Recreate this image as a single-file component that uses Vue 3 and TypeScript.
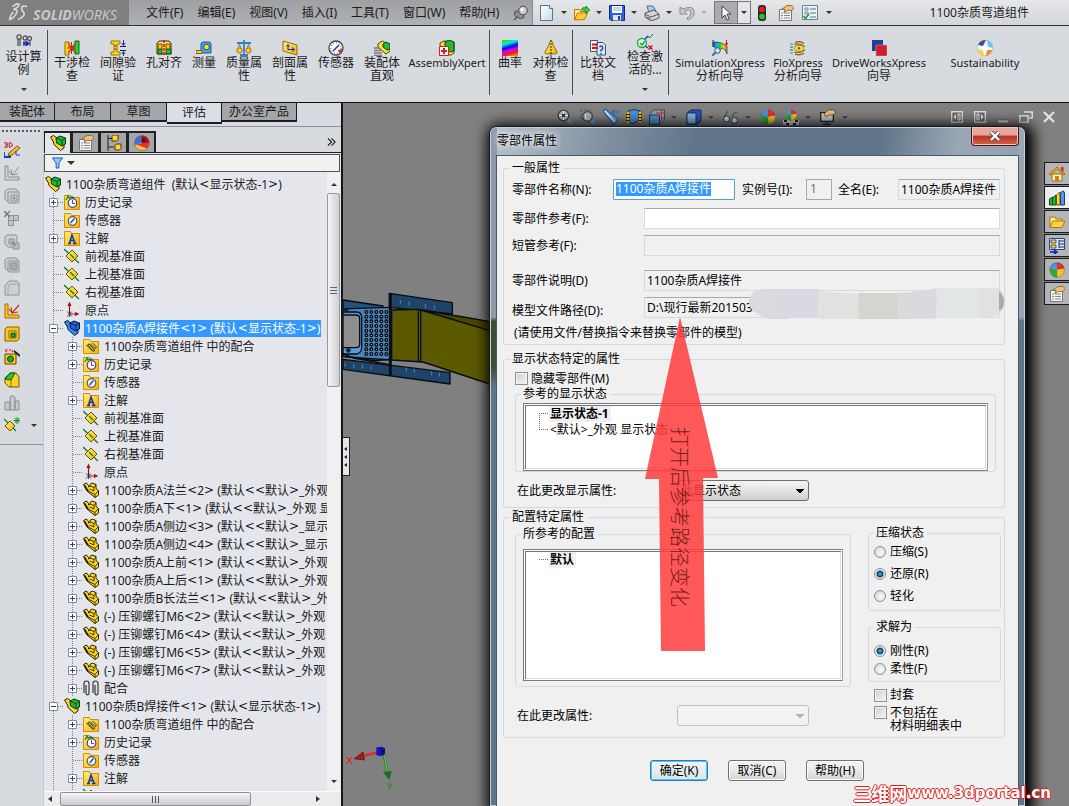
<script setup lang="ts">
import { ref } from 'vue'

interface Tool { icon: string; lines: string[]; w: number; tall?: boolean; caret?: boolean; sep?: boolean }
interface Node { d: number; icon: string; text: string; exp?: '+' | '-'; sel?: boolean }

const menus = ['文件(F)', '编辑(E)', '视图(V)', '插入(I)', '工具(T)', '窗口(W)', '帮助(H)']
const quick = ['new', 'open', 'save', 'print', 'undo']

const tools: Tool[] = [
  { icon: 'design', lines: ['设计算', '例'], w: 47, tall: true, caret: true, sep: true },
  { icon: 'interf', lines: ['干涉检', '查'], w: 46 },
  { icon: 'clear', lines: ['间隙验', '证'], w: 46 },
  { icon: 'hole', lines: ['孔对齐'], w: 46 },
  { icon: 'measure', lines: ['测量'], w: 34 },
  { icon: 'mass', lines: ['质量属', '性'], w: 46 },
  { icon: 'section', lines: ['剖面属', '性'], w: 46 },
  { icon: 'gauge', lines: ['传感器'], w: 46 },
  { icon: 'visual', lines: ['装配体', '直观'], w: 46 },
  { icon: 'axpert', lines: ['AssemblyXpert'], w: 84, sep: true },
  { icon: 'curv', lines: ['曲率'], w: 38 },
  { icon: 'symm', lines: ['对称检', '查'], w: 43, sep: true },
  { icon: 'compare', lines: ['比较文', '档'], w: 48 },
  { icon: 'active', lines: ['检查激', '活的...'], w: 46, tall: true, caret: true, sep: true },
  { icon: 'sim', lines: ['SimulationXpress', '分析向导'], w: 100 },
  { icon: 'flo', lines: ['FloXpress', '分析向导'], w: 56 },
  { icon: 'drive', lines: ['DriveWorksXpress', '向导'], w: 106 },
  { icon: 'sust', lines: ['Sustainability'], w: 106 },
]
const latin = (s: string) => /^[A-Za-z]+$/.test(s)

const tabs = [
  { t: '装配体', w: 55 }, { t: '布局', w: 56 }, { t: '草图', w: 56 },
  { t: '评估', w: 55 }, { t: '办公室产品', w: 75 },
]
const activeTab = ref(3)

const strip = ['sk3d', 'g-corner', 'g-box', 'g-cells', 'g-drag', 'g-hole', 'g-fillet', 'y-corner', 'y-box', 'y-wiz', 'y-green', 'g-bars', 'refgeo']
const panelTabs = ['asm', 'props', 'config', 'display-ball']

const tree: Node[] = [
  { d: 0, icon: 'asm', text: '1100杂质弯道组件  (默认<显示状态-1>)' },
  { d: 1, icon: 'f-hist', text: '历史记录', exp: '+' },
  { d: 1, icon: 'f-sensor', text: '传感器' },
  { d: 1, icon: 'f-note', text: '注解', exp: '+' },
  { d: 1, icon: 'plane', text: '前视基准面' },
  { d: 1, icon: 'plane', text: '上视基准面' },
  { d: 1, icon: 'plane', text: '右视基准面' },
  { d: 1, icon: 'origin', text: '原点' },
  { d: 1, icon: 'asmblue', text: '1100杂质A焊接件<1> (默认<显示状态-1>)', exp: '-', sel: true },
  { d: 2, icon: 'f-mate', text: '1100杂质弯道组件 中的配合', exp: '+' },
  { d: 2, icon: 'f-hist', text: '历史记录', exp: '+' },
  { d: 2, icon: 'f-sensor', text: '传感器' },
  { d: 2, icon: 'f-note', text: '注解', exp: '+' },
  { d: 2, icon: 'plane', text: '前视基准面' },
  { d: 2, icon: 'plane', text: '上视基准面' },
  { d: 2, icon: 'plane', text: '右视基准面' },
  { d: 2, icon: 'origin', text: '原点' },
  { d: 2, icon: 'part', text: '1100杂质A法兰<2> (默认<<默认>_外观', exp: '+' },
  { d: 2, icon: 'part', text: '1100杂质A下<1> (默认<<默认>_外观 显示', exp: '+' },
  { d: 2, icon: 'part', text: '1100杂质A侧边<3> (默认<<默认>_显示状', exp: '+' },
  { d: 2, icon: 'part', text: '1100杂质A侧边<4> (默认<<默认>_显示状', exp: '+' },
  { d: 2, icon: 'part', text: '1100杂质A上前<1> (默认<<默认>_外观', exp: '+' },
  { d: 2, icon: 'part', text: '1100杂质A上后<1> (默认<<默认>_外观', exp: '+' },
  { d: 2, icon: 'part', text: '1100杂质B长法兰<1> (默认<<默认>_外观', exp: '+' },
  { d: 2, icon: 'part', text: '(-) 压铆螺钉M6<2> (默认<<默认>_外观', exp: '+' },
  { d: 2, icon: 'part', text: '(-) 压铆螺钉M6<4> (默认<<默认>_外观', exp: '+' },
  { d: 2, icon: 'part', text: '(-) 压铆螺钉M6<5> (默认<<默认>_外观', exp: '+' },
  { d: 2, icon: 'part', text: '(-) 压铆螺钉M6<7> (默认<<默认>_外观', exp: '+' },
  { d: 2, icon: 'mate', text: '配合', exp: '+' },
  { d: 1, icon: 'asm', text: '1100杂质B焊接件<1> (默认<显示状态-1>)', exp: '-' },
  { d: 2, icon: 'f-mate', text: '1100杂质弯道组件 中的配合', exp: '+' },
  { d: 2, icon: 'f-hist', text: '历史记录', exp: '+' },
  { d: 2, icon: 'f-sensor', text: '传感器' },
  { d: 2, icon: 'f-note', text: '注解', exp: '+' },
  { d: 2, icon: 'plane', text: '' },
]
const parts = (s: string) => s.split(/([<>]+)/).filter(Boolean)

const hud = [
  { i: 'zfit' }, { i: 'zarea' }, { i: 'prev' }, { i: 'hsec' }, { i: 'orient', c: true }, { i: 'display', c: true },
  { i: 'glasses', c: true }, { i: 'ball' }, { i: 'scene', c: true }, { i: 'view', c: true },
]
const winCtl = ['w-left', 'w-right', 'w-min', 'w-rest', 'w-close']
const task = ['home', 'lib', 'folder', 'palette', 'ball', 'props']
const activeTask = ref(1)

const compName = ref('1100杂质A焊接件')
const compRef = ref('')
const hide = ref(false)
const suppress = ref('还原(R)')
const solve = ref('刚性(R)')
const envelope = ref(false)
const exclude = ref(false)
const dots = Array.from({ length: 50 }, (_, n) => ({ x: 94 + (n % 5) * 15, y: 156 + Math.floor(n / 5) * 14 }))
</script>

<template>
  <div class="app">
    <svg class="defs" aria-hidden="true">
      <defs>
        <linearGradient id="gy" x1="0" y1="0" x2="1" y2="1"><stop offset="0" stop-color="#fff27a" /><stop offset="1" stop-color="#f0b400" /></linearGradient>
        <linearGradient id="gp" x1="0" y1="0" x2="1" y2="1"><stop offset="0" stop-color="#fff" /><stop offset="1" stop-color="#c4dcf0" /></linearGradient>
        <linearGradient id="gsim" x1="0" y1="0" x2="1" y2="0"><stop offset="0" stop-color="#1030e0" /><stop offset=".25" stop-color="#10b0f0" /><stop offset=".5" stop-color="#20d040" /><stop offset=".75" stop-color="#f8d010" /><stop offset="1" stop-color="#f07010" /></linearGradient>
        <linearGradient id="gcurv" x1=".3" y1="0" x2=".6" y2="1"><stop offset="0" stop-color="#30e000" /><stop offset=".2" stop-color="#00f0e0" /><stop offset=".45" stop-color="#0010f0" /><stop offset=".65" stop-color="#e000f0" /><stop offset=".85" stop-color="#f02000" /><stop offset="1" stop-color="#f08000" /></linearGradient>
      </defs>
      <symbol id="folderbase" viewBox="0 0 16 16"><path d="M.5 3.500V1.500h6l1 2h8v12H.5z" fill="url(#gy)" stroke="#d98a00" /></symbol>
      <symbol id="design" viewBox="0 0 16 16"><g fill="none" stroke="#555" stroke-width="1.300"><path d="M2 5V12M4 5v7M8 7v5M10 7v5" /><circle cx="3" cy="3" r="2.200" /><circle cx="9" cy="4" r="2" /><circle cx="13.500" cy="4.500" r="2" /><path d="M14 7v5" /></g><path d="M7 8.500h3V6.500l4 3-4 3v-2H7z" fill="#0a28d0" /></symbol>
      <symbol id="interf" viewBox="0 0 16 16"><path d="M1 2h4v5h3v4H5v4H1z" fill="#ffd91a" stroke="#8a6b00" /><path d="M15 1h-4v5H9v4h2v4h4z" fill="#2fce3b" stroke="#0a6b12" /><path d="M4 3l7 10M11 3L4 13M7.500 2v12M3 8h9" stroke="#f01010" stroke-width="1" /></symbol>
      <symbol id="clear" viewBox="0 0 16 16"><path d="M1 1h9v3H7v2H4V4H1zM4 9h3v3h3v3H1v-3h3zM4 6h3v3H4z" fill="#ffd91a" stroke="#9a7400" /><path d="M10 6.500h6M10 10.500h6" stroke="#222" /><path d="M13.500 0v5M11.800 3l1.700 2.500L15.200 3M13.500 16v-4M11.800 14l1.700-2.500 1.700 2.500" stroke="#1030d0" fill="none" /></symbol>
      <symbol id="hole" viewBox="0 0 16 16"><path d="M1 3l2-2h10l2 2v11H1z" fill="#f4e28a" stroke="#3a2d00" /><path d="M2 9h4v5H2zM10 9h5v5h-5z" fill="#24c034" stroke="#06540e" /><path d="M2 4h4v5H2zM10 4h4v5h-4z" fill="#ffc800" stroke="#6a4d00" /><path d="M8 0v16" stroke="#e01010" stroke-dasharray="3 1" stroke-width="1.500" /></symbol>
      <symbol id="measure" viewBox="0 0 16 16"><path d="M5 4q0-2 2-2h6q2 0 2 2v9H7q-2 0-2-2z" fill="#4aa6d8" stroke="#1c5d86" /><circle cx="10.500" cy="7" r="2.800" fill="#ffdf30" stroke="#205070" /><path d="M0 10.500h6v3H0z" fill="#f0d060" stroke="#7a6010" /></symbol>
      <symbol id="mass" viewBox="0 0 16 16"><path d="M8 0v14M1 3h14M4 15h8" stroke="#2a7fd8" stroke-width="1.800" /><path d="M3.500 4L1 11M3.500 4L6 11M12.500 4L10 11M12.500 4L15 11" stroke="#8a6a10" stroke-width=".8" /><circle cx="3.500" cy="10.500" r="2.600" fill="#ffc830" stroke="#a87400" /><circle cx="12.500" cy="10.500" r="2.600" fill="#ffc830" stroke="#a87400" /></symbol>
      <symbol id="section" viewBox="0 0 16 16"><path d="M1 1l14 4v10L1 11z" fill="url(#gy)" stroke="#9a6b00" /><path d="M6 10V5M4.500 6.500L6 4.500l1.500 2M6 9.500h6M10 7.500l2.500 2-2.500 2" stroke="#1020d0" fill="none" /></symbol>
      <symbol id="gauge" viewBox="0 0 16 16"><circle cx="8" cy="8" r="7" fill="#fff" stroke="#444" stroke-width="1.300" /><circle cx="8" cy="8" r="5.200" fill="none" stroke="#444" stroke-dasharray="1 2" /><path d="M5 11l6-6" stroke="#1030d0" stroke-width="1.500" /><path d="M10 10l4-1q0 3-3 4z" fill="#e02020" /></symbol>
      <symbol id="visual" viewBox="0 0 16 16"><path d="M0 8h6M0 10.500h7M0 13h8M0 15.500h8" stroke="#7b7b7b" stroke-width="1.300" /><path d="M4 4l4-3 8 4v6l-4 3-8-7z" fill="#ffe03a" stroke="#594400" /><path d="M9 4l3-2 4 2v5l-3 1-4-3z" fill="#20b838" stroke="#06480e" /></symbol>
      <symbol id="axpert" viewBox="0 0 16 16"><path d="M1 3l4-2 10 1v11l-3 2H2z" fill="#ffd83a" stroke="#594400" /><path d="M6 2l4-2 5 2v9l-4 1-5-3z" fill="#24b83a" stroke="#06480e" /><path d="M.5 6.500h9v9h-9z" fill="#fff" stroke="#e01818" /><path d="M5 8v6M2 11h6" stroke="#e01818" stroke-width="2" /></symbol>
      <symbol id="curv" viewBox="0 0 16 16"><path d="M0 0h16v16H0z" fill="url(#gcurv)" /></symbol>
      <symbol id="symm" viewBox="0 0 16 16"><path d="M8 1q2 0 2 4l4 7q2 2-6 2t-6-2l4-7q0-4 2-4z" fill="url(#gy)" stroke="#8a6200" /><path d="M8 0v16" stroke="#222" stroke-dasharray="2 1" /></symbol>
      <symbol id="compare" viewBox="0 0 16 16"><path d="M.5.500h7v11h-7z" fill="#eef5fc" stroke="#456" /><path d="M7 2.500h6l2.500 2.500v10H7z" fill="#d8e9f8" stroke="#456" /><path d="M2 4.500h6M2 8h6" stroke="#e01010" stroke-width="2" /><path d="M9.500 7q2-2 3 0t-1.500 3v1.500M11 13v1.500" stroke="#1050d0" stroke-width="1.500" fill="none" /></symbol>
      <symbol id="active" viewBox="0 0 16 16"><circle cx="5" cy="9" r="4.500" fill="#e0f5e4" stroke="#26a43c" stroke-width="1.300" /><path d="M3 9l2 2 3-4" stroke="#26a43c" fill="none" stroke-width="1.500" /><path d="M8 5l3-3M8 12l3 2" stroke="#1030d0" stroke-width="1.300" /><path d="M11 2l1.500 2L16 0" stroke="#0a7a18" fill="none" /><path d="M11.500 11.500l4 4M15.500 11.500l-4 4" stroke="#e01010" stroke-width="1.500" /></symbol>
      <symbol id="sim" viewBox="0 0 16 16"><path d="M1 0v7" stroke="#0a8a1a" stroke-width="1.600" stroke-dasharray="1.500 .5" /><path d="M1 2q7-1 14 4v8q-1-5-5-6L5 13q-1-6-4-7z" fill="url(#gsim)" stroke="#234" stroke-width=".7" /><circle cx="5.500" cy="10.500" r="2.800" fill="#cfe6fa" stroke="#446" /><path d="M3.500 12.500L0 16" stroke="#3a70b8" stroke-width="2" /><path d="M14.500 0v4M13 3l1.500 2L16 3" stroke="#e01010" fill="none" /></symbol>
      <symbol id="flo" viewBox="0 0 16 16"><g fill="none" stroke-width="1.200"><path d="M5 2.500q5-2 9 1M5 14q5 2 9-1" stroke="#e03010" /><path d="M4 4.500q5-2 11 2M4 12q5 2 11-2" stroke="#20a030" /><path d="M0 4h3M0 13h3" stroke="#20a030" /><path d="M0 7h3M0 10h3" stroke="#1060e0" /></g><ellipse cx="9" cy="8.300" rx="4.500" ry="3" fill="#ffe040" stroke="#c08000" /><circle cx="9" cy="8.300" r="1.200" fill="#e02020" /></symbol>
      <symbol id="drive" viewBox="0 0 16 16"><path d="M1 0h11v11H1z" fill="#1f3f9a" /><path d="M5 5h11v11H5z" fill="#cc2030" stroke="#e89aa0" stroke-width=".5" /></symbol>
      <symbol id="sust" viewBox="0 0 16 16"><circle cx="8" cy="8" r="7.800" fill="#f2f7fb" stroke="#8aa" stroke-width=".5" /><path d="M1 5q2-5 8-5L6 6z" fill="#3a4fa0" /><path d="M10 0q6 2 6 8l-5-1z" fill="#6cc4f0" /><path d="M15.500 10q-2 5-7 6l2-6z" fill="#f09020" /><path d="M7 15.800Q1 15 .5 8.500L6 11z" fill="#f8d430" /><circle cx="8" cy="8" r="2" fill="#fff" /></symbol>
      <symbol id="new" viewBox="0 0 16 16"><path d="M1.500.5h9l3 3v12h-12z" fill="url(#gp)" stroke="#5b7590" /><path d="M10.500.5v3h3" fill="#fff" stroke="#5b7590" /></symbol>
      <symbol id="open" viewBox="0 0 16 16"><path d="M.5 14.500v-10h5l1 2h5v2" fill="#ffe98a" stroke="#c07a00" /><path d="M.5 15l3-7h10l-3 6.500z" fill="#ffc93a" stroke="#c07a00" /><path d="M7 5q2-4 5-2V1l4 4-4 3.500V6.500Q9 4 7 5z" fill="#3ecb3a" stroke="#0d7a14" stroke-width=".7" /></symbol>
      <symbol id="save" viewBox="0 0 16 16"><path d="M.5.500h15v15H2L.5 14z" fill="#2a63d8" stroke="#0d2a80" /><path d="M3 1h10v7H3z" fill="#fff" /><path d="M4 3h8M4 5h8" stroke="#9ab" /><path d="M4 10h8v5.500H4z" fill="#dfe6f4" /><path d="M9 11h2v4H9z" fill="#1c3fa0" /></symbol>
      <symbol id="print" viewBox="0 0 16 16"><path d="M3 1h6l3 5-7 2z" fill="#a8cdf4" stroke="#4a6f9c" /><path d="M1 8l9-3 5 4v4l-8 3-6-4z" fill="#d4d4d4" stroke="#555" /><path d="M1 9l6 3 8-3M3 12l4 2" stroke="#555" fill="none" /></symbol>
      <symbol id="undo" viewBox="0 0 16 16"><path d="M1 2v7h7L5.500 6.500Q11 3 12 7t-4 6l1 2q7-3 6-9T4 4z" fill="#c9c9cb" stroke="#8c8c90" /></symbol>
      <symbol id="cursor" viewBox="0 0 16 16"><path d="M4 1v12l3-3 2 5 2-1-2-5h4z" fill="#fff" stroke="#444" /></symbol>
      <symbol id="traffic" viewBox="0 0 16 16"><rect x="4" y="0" width="8" height="16" rx="3" fill="#2b2b2b" /><circle cx="8" cy="4.500" r="2.800" fill="#e82020" /><circle cx="8" cy="11.500" r="2.800" fill="#22c832" /></symbol>
      <symbol id="props" viewBox="0 0 16 16"><path d="M1.500 4.500h12v11h-12z" fill="#f5f5f5" stroke="#777" /><path d="M3 8h2M6 8h6M3 10.500h2M6 10.500h6M3 13h2M6 13h6" stroke="#888" /><path d="M4 4l5-3.500h5l2 2-2 3H9l-3 2 1-3z" fill="#f0c080" stroke="#8a5a20" stroke-width=".8" /></symbol>
      <symbol id="options" viewBox="0 0 16 16"><path d="M.5.500h15v14H.5z" fill="#e8f1f9" stroke="#6a8198" /><path d="M3 3h3v2H3zM3 7h3v2H3z" fill="#fff" stroke="#5a7088" stroke-width=".8" /><path d="M8 4h6M8 8h6M8 12h6" stroke="#5a7088" /><path d="M1.500 11l2 2.500L7 9" stroke="#18a02a" stroke-width="1.700" fill="none" /></symbol>
      <symbol id="pin" viewBox="0 0 16 16"><path d="M1 15l4-4" stroke="#555" stroke-width="1.400" /><ellipse cx="6.500" cy="9.500" rx="5" ry="3.300" fill="#8d8f94" stroke="#44464c" transform="rotate(25 6 9)" /><circle cx="10" cy="5.500" r="4.300" fill="#c9ccd4" stroke="#44464c" /><circle cx="9" cy="4.500" r="1.600" fill="#fff" /></symbol>
      <symbol id="asm" viewBox="0 0 16 16"><path d="M.5 2l3-1.500L7 3v3l7 2v5l-3.500 2.500L4 9.500 3.500 7z" fill="#ffd827" stroke="#2b2100" /><path d="M6 3l4-2 5.500 2v6L12 11 6.500 8z" fill="#1fb53a" stroke="#043c0a" /><path d="M6 3l6 2.500L15.500 3M12 5.500V11" stroke="#043c0a" fill="none" stroke-width=".8" /></symbol>
      <symbol id="asmblue" viewBox="0 0 16 16"><path d="M.5 2l3-1.500L7 3v3l7 2v5l-3.500 2.500L4 9.500 3.500 7z" fill="#2f8df0" stroke="#04163c" /><path d="M6 3l4-2 5.500 2v6L12 11 6.500 8z" fill="#2464d8" stroke="#04163c" /><path d="M6 3l6 2.500L15.500 3M12 5.500V11" stroke="#04163c" fill="none" stroke-width=".8" /></symbol>
      <symbol id="part" viewBox="0 0 16 16"><path d="M.5 2.500L3.500 1l2 2.500V5L7 4V2.500L9 1l4 1.500v4l2.500 2V13L12 15.500 4 9z" fill="#ffd827" stroke="#2b2100" stroke-linejoin="round" /><path d="M1 3l4 6 7 3.500L15 9M12 12.500v3M7 4l4 1.500L13 3M11 5.500V9L6.500 7" stroke="#2b2100" fill="none" stroke-width=".9" /><path d="M1.500 3.500L5 9" stroke="#2b2100" stroke-width="1.600" /></symbol>
      <symbol id="config" viewBox="0 0 16 16"><path d="M2 0v16M2 3.500h5M2 12h6" stroke="#222" /><path d="M6 1.500l1.500-1.500H12v4.500L10.500 6H6zM9 10.500L10.500 9H15v4.500L13.500 15H9z" fill="#ffd827" stroke="#4a3900" /></symbol>
      <symbol id="ball" viewBox="0 0 16 16"><circle cx="8" cy="8" r="7.600" fill="#ddd" /><path d="M8 8L1 5Q3 .5 8 .5z" fill="#5a8ae8" /><path d="M8 8V.5q6 .3 7.500 6z" fill="#e03030" /><path d="M8 8l7.500-1.500q0 8-7 9z" fill="#f4c420" /><path d="M8 8l.5 7.500Q0 15 .8 5z" fill="#2ba838" /><circle cx="8" cy="8" r="7.400" fill="none" stroke="#4446" /></symbol>
      <symbol id="display-ball" viewBox="0 0 16 16"><circle cx="8" cy="8" r="7.500" fill="#f4d030" /><path d="M8 8L.7 10Q-.5 2 7 .5z" fill="#3a70e0" /><path d="M7 .5q8-.5 8.500 8L8 9z" fill="#b01020" /><path d="M.7 9q5 1 7.300-1l7.400 1.500-2 4z" fill="#e83030" /><circle cx="9.500" cy="5" r="2" fill="#3a1020" /><circle cx="8" cy="8" r="7.400" fill="none" stroke="#5558" /></symbol>
      <symbol id="funnel" viewBox="0 0 12 12"><path d="M.5.500h11L7.500 6v5.500h-3V6z" fill="#9ac8f4" stroke="#0a50b8" /></symbol>
      <symbol id="f-hist" viewBox="0 0 16 16"><use href="#folderbase" /><circle cx="8.500" cy="9" r="4.300" fill="#fff" stroke="#3a3ab8" stroke-width="1.200" /><path d="M8.500 6v3.500H11" stroke="#d02020" fill="none" /><path d="M2 6l2-4 1 2q3-2 5 0" stroke="#18901e" fill="none" stroke-width="1.400" /></symbol>
      <symbol id="f-sensor" viewBox="0 0 16 16"><use href="#folderbase" /><circle cx="8.500" cy="9" r="4.300" fill="#eef3fa" stroke="#556" stroke-width="1.200" /><path d="M6.500 11l4-4.500" stroke="#2040a0" stroke-width="1.200" /></symbol>
      <symbol id="f-note" viewBox="0 0 16 16"><use href="#folderbase" /><path d="M4 13.500h3M9 13.500h3.500M5.500 13L8 5l3 8M6.500 10.500h3.500" stroke="#1230b8" stroke-width="1.500" fill="none" /></symbol>
      <symbol id="f-mate" viewBox="0 0 16 16"><use href="#folderbase" /><path d="M3.500 7l6 6q2 1 2-1l-5-5.500q-2-1-1.500.8l4.500 5M7 5.500l5 5q2-.5 1-2L9.500 5" stroke="#333" fill="none" /></symbol>
      <symbol id="plane" viewBox="0 0 16 16"><path d="M0 1l15 14" stroke="#10801c" stroke-width="1.300" /><path d="M8 2l6 6-6 6-6-6z" fill="url(#gy)" stroke="#6a4d00" /><path d="M6 6l4 4" stroke="#10801c" stroke-width="1.200" /></symbol>
      <symbol id="origin" viewBox="0 0 16 16"><path d="M5.500 11V2M4 4l1.500-3L7 4M5 12h8M11 10.500l3 1.500-3 1.500" stroke="#a01010" fill="none" stroke-width="1.200" /><path d="M3 9.500l5 5M8 9.500l-5 5M5.500 9v6" stroke="#222" stroke-width=".8" /></symbol>
      <symbol id="mate" viewBox="0 0 16 16"><g fill="none" stroke="#3a3a3a" stroke-width="1.200"><path d="M1 13V4q0-3 2.500-3T6 4v8q0 3-1.500 3T3 12V5M10 13V4q0-3 2.500-3T15 4v8q0 3-1.500 3T12 12V5" /></g></symbol>
      <symbol id="sk3d" viewBox="0 0 16 16"><path d="M0 .8h3.200v4.400H0M1 3h2.200M5.200.8v4.400h1.500L8.200 4V2L6.700.8z" fill="none" stroke="#c01818" /><path d="M5 11l8-7 3 2-8 7-4 1z" fill="#ffb52a" stroke="#8a5a00" /><path d="M0 10v5h7" stroke="#1440d0" fill="none" stroke-width="1.800" /><path d="M12 9v4h4" stroke="#1440d0" fill="none" /></symbol>
      <symbol id="g-corner" viewBox="0 0 16 16"><path d="M1 1h3v11h11v3H1z" fill="#d0d1d4" stroke="#8d8f93" /><path d="M15 2L8 10M7 4l1 6 6-1M5 6l3 4" stroke="#8d8f93" fill="none" /></symbol>
      <symbol id="g-box" viewBox="0 0 16 16"><path d="M1 3l3-2h8l3 3v10l-2 1H5l-4-4z" fill="#d0d1d4" stroke="#8d8f93" /><path d="M4 4h11M4 4v10M7 7h6v6H7zM9 9h2v2H9z" fill="none" stroke="#8d8f93" /></symbol>
      <symbol id="g-cells" viewBox="0 0 16 16"><path d="M4.500 4.500h5v5h-5zM9.500 4.500h5v5h-5zM4.500 9.500h5v5h-5z" fill="#c2c4c7" stroke="#8d8f93" /><path d="M0 0l6 6M6 0L0 6" stroke="#777" stroke-width="1.500" /></symbol>
      <symbol id="g-drag" viewBox="0 0 16 16"><path d="M1 3l2-2h9l1 2v10H4l-3-3z" fill="#d0d1d4" stroke="#8d8f93" /><path d="M5 5h5v5H5zM9 9h6v6H9z" fill="#bbbdc0" stroke="#8d8f93" /><path d="M7 7l5 5" stroke="#777" /></symbol>
      <symbol id="g-hole" viewBox="0 0 16 16"><path d="M1 3l2-2h9l3 3v11H5l-4-4z" fill="#d0d1d4" stroke="#8d8f93" /><path d="M6 6h7v7H6z" fill="#a7a9ad" stroke="#8d8f93" /><path d="M4 4h11M4 4v10" stroke="#8d8f93" /></symbol>
      <symbol id="g-fillet" viewBox="0 0 16 16"><path d="M1 6l4-5h8l2 2v12H1z" fill="#d0d1d4" stroke="#8d8f93" /><path d="M4 15V8q0-4 4-4h7" stroke="#a3a5a8" fill="none" /></symbol>
      <symbol id="y-corner" viewBox="0 0 16 16"><path d="M1 1h3v11h11v3H1z" fill="#ffc61a" stroke="#a86a00" /><path d="M15 2L8 10M7 4l1 6 6-1M5 6l3 4" stroke="#d03010" fill="none" stroke-width="1.200" /></symbol>
      <symbol id="y-box" viewBox="0 0 16 16"><path d="M1 3l2-2h12v12l-2 2H1z" fill="#ffc61a" stroke="#8a5a00" /><path d="M5 5h7v7H5z" fill="#ffe97a" stroke="#8a5a00" /><path d="M7 7h4v4H7z" fill="#1da82e" stroke="#064e0e" /></symbol>
      <symbol id="y-wiz" viewBox="0 0 16 16"><path d="M1 5h11v10H1z" fill="#ffc61a" stroke="#6a4a00" /><circle cx="6.500" cy="10" r="3" fill="#1da82e" stroke="#064e0e" /><path d="M10 2l6 5" stroke="#222" stroke-width="2" /><path d="M1 1l2 2M6 0v2M3 0v1M9 1L8 3" stroke="#e03010" stroke-width="1.300" /></symbol>
      <symbol id="y-green" viewBox="0 0 16 16"><path d="M1 6l5-5h6l3 4v10H5l-4-4z" fill="#ffd21f" stroke="#7a5400" /><path d="M1 7l5-6h5L7 8z" fill="#2bc43c" stroke="#07590f" /><path d="M7 8v7" stroke="#7a5400" stroke-width=".8" /></symbol>
      <symbol id="g-bars" viewBox="0 0 16 16"><path d="M1 7h5v8H1zM6 2l2-1.500L11 2v13H6zM11 6h4v9h-4z" fill="#c6c8cb" stroke="#8d8f93" /></symbol>
      <symbol id="refgeo" viewBox="0 0 16 16"><path d="M0 2l12 12" stroke="#10801c" stroke-width="1.200" /><path d="M6 4l5 5-5 5-5-5z" fill="url(#gy)" stroke="#6a4d00" /><path d="M13 0v7M9.500 3.500h6.500M10.500 1l5 5M15.500 1l-5 5" stroke="#109020" /></symbol>
      <symbol id="zfit" viewBox="0 0 16 16"><path d="M10 10l5 5" stroke="#6aa4dc" stroke-width="3" /><circle cx="6.500" cy="6.500" r="5.300" fill="#aab0b6" stroke="#3c4146" stroke-width="1.300" /><path d="M6.500 2v9M2 6.500h9" stroke="#f4f4f4" /><path d="M5 5h3v3H5z" fill="#333" /></symbol>
      <symbol id="zarea" viewBox="0 0 16 16"><path d="M10.500 10.500l4.500 4.500" stroke="#6aa4dc" stroke-width="3" /><path d="M1 1h10v9H1z" fill="none" stroke="#555" stroke-dasharray="2 1" /><circle cx="7.500" cy="7.500" r="4.800" fill="#a8aeb4" stroke="#3c4146" stroke-width="1.200" /><path d="M5.500 5v5h4" stroke="#eee" fill="none" /></symbol>
      <symbol id="prev" viewBox="0 0 16 16"><path d="M0 2l2-2 13 10-4 6z" fill="#5aa6e6" stroke="#1d4a80" /><path d="M2 2l10 11" stroke="#d8ecfc" stroke-width="1.500" /><path d="M9 3h7M11.500.5L9 3l2.500 2.500" stroke="#2f6fc0" fill="none" stroke-width="1.300" /></symbol>
      <symbol id="hsec" viewBox="0 0 16 16"><path d="M2 2q6-3 12 0v12q-5-3-6 1l-6-2z" fill="#4a90d8" stroke="#163a66" /><path d="M2 3v11M14 3v11" stroke="#2a2200" stroke-width="4" /><path d="M2 3v11M14 3v11" stroke="#f4c820" stroke-width="3" stroke-dasharray="2 1" /></symbol>
      <symbol id="orient" viewBox="0 0 16 16"><path d="M.5 6l4-5h11v9l-5 5.500H.5z" fill="#8d9dab" stroke="#3d4a58" /><path d="M.5 6h10v9.500H.5z" fill="#4d94d4" stroke="#233a52" /><path d="M7 4h8M12.500 1v9M11 12l4-4" stroke="#e02020" /></symbol>
      <symbol id="display" viewBox="0 0 16 16"><path d="M1 4l4-3h10v11l-4 4H1z" fill="#2a56b0" stroke="#132c58" /><path d="M1 4h9v11H1z" fill="#86b6e6" stroke="#1a3560" /></symbol>
      <symbol id="glasses" viewBox="0 0 16 16"><path d="M1 8l4-6M9 8q2-5 5-5" stroke="#444" fill="none" /><circle cx="3.500" cy="10" r="3" fill="#b8d8ee" stroke="#333" /><circle cx="11.500" cy="11.500" r="3" fill="#b8d8ee" stroke="#333" /></symbol>
      <symbol id="scene" viewBox="0 0 16 16"><path d="M0 11h16v5H0z" fill="#ddd" /><path d="M1 11h3v2H1zM12 11h3v2h-3zM3 14h3v2H3zM10 14h3v2h-3z" fill="#222" /><use href="#ball" x="2" y="0" width="12" height="12" /></symbol>
      <symbol id="view" viewBox="0 0 16 16"><path d="M.7 3.700h12.600v8.600H.7z" fill="#c4c9ce" stroke="#222" stroke-width="1.300" /><path d="M3 15.500h8M7 12v3" stroke="#222" stroke-width="1.300" /><path d="M4 5l4-4h5l3 2-3 3H9L6 8z" fill="#e8bc7c" stroke="#6a4010" stroke-width=".8" /></symbol>
      <symbol id="w-left" viewBox="0 0 12 12"><path d="M.7.700h10.600v10.600H.7z" fill="#686868" stroke="#ddd" stroke-width="1.400" /><path d="M5 3L2.500 6 5 9z" fill="#eee" /><path d="M7 3h2v6H7z" fill="none" stroke="#eee" /></symbol>
      <symbol id="w-right" viewBox="0 0 12 12"><path d="M.7.700h10.600v10.600H.7z" fill="#686868" stroke="#ddd" stroke-width="1.400" /><path d="M7 3l2.500 3L7 9z" fill="#eee" /><path d="M3 3h2v6H3z" fill="none" stroke="#eee" /></symbol>
      <symbol id="w-min" viewBox="0 0 12 12"><path d="M.5 9h11v3H.5z" fill="#ddd" stroke="#555" stroke-width=".6" /></symbol>
      <symbol id="w-rest" viewBox="0 0 14 12"><path d="M5 1h8.200v6H10M.8 4.800H9v6.400H.8z" fill="none" stroke="#ddd" stroke-width="1.600" /></symbol>
      <symbol id="w-close" viewBox="0 0 12 12"><path d="M1 1l10 10M11 1L1 11" stroke="#e4e4e4" stroke-width="2.200" /></symbol>
      <symbol id="home" viewBox="0 0 16 16"><path d="M3 8h10v7H3z" fill="#fff0b0" stroke="#9a6a00" /><path d="M12 1h2.500v6L12 5z" fill="#d03020" /><path d="M0 8l8-7 8 7-1 1-7-6-7 6z" fill="#ffbe1e" stroke="#9a5a00" stroke-width=".8" /><path d="M6 10h4v5H6z" fill="#c87f20" /></symbol>
      <symbol id="lib" viewBox="0 0 16 16"><path d="M.5 9l3-2v8h-3z" fill="#28b838" stroke="#055010" /><path d="M3.500 8l3.500-3v10H3.500z" fill="#28b838" stroke="#055010" /><path d="M7.500 5L11 2v13H7.500z" fill="#ffd827" stroke="#6a5000" /><path d="M11.500 3q3-4 4 0v12h-4z" fill="#5a92e8" stroke="#143a80" /></symbol>
      <symbol id="folder" viewBox="0 0 16 16"><path d="M1 13V3h5l1 2h6v2" fill="#ffe98a" stroke="#b07400" /><path d="M1 13.500L4 7h12l-3 6.500z" fill="#ffd24a" stroke="#b07400" /></symbol>
      <symbol id="palette" viewBox="0 0 16 16"><path d="M.5.500h15v11H.5z" fill="#dce9f6" stroke="#234a80" /><path d="M2 2h5v3H2zM2 7h5v3H2z" fill="#ffd827" stroke="#1a3460" stroke-width=".8" /><path d="M10 2v8M10 3h5M10 6h5M10 9h5" stroke="#1a3460" /><path d="M1 14h6M5 12l3 2-3 2" stroke="#0a18d0" fill="none" stroke-width="1.500" /></symbol>
    </svg>

    <header class="titlebar">
      <div class="logo">
        <svg viewBox="0 0 24 24" class="ds"><g fill="none" stroke="#d9d9da" stroke-width="1.800"><path d="M6 5q7-5 7-2 0 3-6 5 6 0 3 5-3 5-7 6 1-6 4-8" /><path d="M22 5q-6-2-6 2 0 2 2 4t-1 5-5 3" /></g></svg>
        <span class="brand"><b>SOLID</b>WORKS</span>
      </div>
      <nav class="menu">
        <button v-for="m in menus" :key="m" type="button">{{ m }}</button>
        <svg class="ic pin"><use href="#pin" /></svg>
      </nav>
      <div class="quick">
        <span v-for="q in quick" :key="q" class="qgroup">
          <button type="button" :aria-label="q"><svg class="ic"><use :href="'#' + q" /></svg></button>
          <i class="caret" :class="{ off: q === 'undo' }"></i>
        </span>
        <span class="selbox"><button type="button" aria-label="select"><svg class="ic"><use href="#cursor" /></svg></button><i class="caret"></i></span>
        <button type="button" class="solo" aria-label="rebuild"><svg class="ic"><use href="#traffic" /></svg></button>
        <button type="button" class="solo" aria-label="properties"><svg class="ic"><use href="#props" /></svg></button>
        <button type="button" class="solo" aria-label="options"><svg class="ic"><use href="#options" /></svg></button>
        <i class="caret"></i>
        <span class="doc">1100杂质弯道组件</span>
      </div>
    </header>

    <div class="ribbon">
      <button v-for="t in tools" :key="t.icon" type="button" class="tool" :class="{ tall: t.tall, sep: t.sep }" :style="{ width: t.w + 'px' }">
        <svg class="ic"><use :href="'#' + t.icon" /></svg>
        <span v-for="l in t.lines" :key="l" class="tl" :class="{ lat: latin(l) }">{{ l }}</span>
        <i v-if="t.caret" class="caret"></i>
      </button>
    </div>

    <main class="body">
      <aside class="side">
        <div class="cmdtabs">
          <button v-for="(t, i) in tabs" :key="t.t" type="button" :class="{ on: i === activeTab }" :style="{ width: t.w + 'px' }" @click="activeTab = i">{{ t.t }}</button>
        </div>
        <div class="cols">
          <div class="strip">
            <div class="grip"></div>
            <div v-for="s in strip" :key="s" class="sbtn">
              <button type="button" :aria-label="s"><svg class="ic"><use :href="'#' + s" /></svg></button>
              <i v-if="s === 'refgeo'" class="caret"></i>
            </div>
          </div>
          <div class="fm">
            <div class="fmtabs">
              <button v-for="(p, i) in panelTabs" :key="p" type="button" :class="{ on: i === 0 }" :aria-label="p"><svg class="ic"><use :href="'#' + p" /></svg></button>
              <span class="more"><svg viewBox="0 0 10 8"><path d="M1 0l4 4-4 4M5 0l4 4-4 4" fill="none" stroke="#222" stroke-width="1.300" /></svg></span>
            </div>
            <div class="filter"><svg class="fun"><use href="#funnel" /></svg><i class="caret"></i></div>
            <div class="treebox">
              <div class="tree">
                <div v-for="(n, k) in tree" :key="k" class="row">
                  <span v-for="g in n.d" :key="g" class="guide" :class="{ leaf: g === n.d }">
                    <button v-if="g === n.d && n.exp" type="button" class="exp" :aria-label="n.exp"><svg viewBox="0 0 9 9"><path d="M.5.500h8v8h-8z" fill="#fff" stroke="#888c94" /><path d="M2 4.500h5" stroke="#2a3f90" /><path v-if="n.exp === '+'" d="M4.500 2v5" stroke="#2a3f90" /></svg></button>
                  </span>
                  <svg class="ic"><use :href="'#' + n.icon" /></svg>
                  <span class="lbl" :class="{ sel: n.sel }"><span v-for="(p, j) in parts(n.text)" :key="j" :class="{ ang: /[<>]/.test(p) }">{{ p }}</span></span>
                </div>
              </div>
              <div class="vbar"><i class="up"></i><div class="vthumb"><i></i><i></i><i></i></div><i class="down"></i></div>
            </div>
            <div class="hbar"><i class="lf"></i><div class="hthumb"><i></i><i></i><i></i></div><i class="rt"></i></div>
          </div>
        </div>
      </aside>

      <section class="view">
        <div class="hud">
          <span v-for="h in hud" :key="h.i" class="hitem"><svg class="ic"><use :href="'#' + h.i" /></svg><i v-if="h.c" class="caret"></i></span>
          <span class="wctl"><button v-for="w in winCtl" :key="w" type="button" :aria-label="w"><svg><use :href="'#' + w" /></svg></button></span>
        </div>
        <div class="handle"><i></i><i></i><i></i></div>

        <svg class="model" viewBox="24 0 456 420">
          <g stroke="#080c12" stroke-width="4" stroke-linejoin="round">
            <path d="M24 120l120 18v14L24 146z" fill="#24507c" />
            <path d="M24 150l22-4 120-4v158L24 290z" fill="#4684c0" />
            <path d="M24 156h40q16 0 16 16v90q0 18-16 20H24z" fill="#5a9ad8" />
            <path d="M24 165h38q12 0 12 10v78q0 10-12 10H24z" fill="#8f8f90" />
            <path d="M163 100l189 28v34l-189-20z" fill="#1f4468" />
            <path d="M24 298l321 40v34L24 328z" fill="#1f4468" />
            <path d="M170 150l80-2 214 38v186l-200-66-94-6z" fill="#5c5a00" />
            <path d="M258 150l170 28 36 8v26z" fill="#474600" />
            <path d="M250 148v158M257 150v158" fill="none" />
            <path d="M24 288l100 14 40-4M24 280l30 14 110 20" fill="none" />
          </g>
          <path d="M166 100v248" stroke="#0a0e16" stroke-width="9" />
          <g fill="#bfb9a0" stroke="#05080c" stroke-width="4"><circle v-for="(p, i) in dots" :key="i" :cx="p.x" :cy="p.y" r="4" /></g>
          <g stroke="#4f94d8" stroke-width="2.500"><path d="M196 120v12M222 124v12M271 132v12M298 136v12M214 322v12M238 326v12M290 334v12M313 338v12M30 308v12M56 312v12M82 314v12M108 318v12" /></g>
          <circle cx="40" cy="271" r="7" fill="#124" /><circle cx="34" cy="152" r="6" fill="#124" />
        </svg>
        <svg class="triad" viewBox="24 0 456 228">
          <path d="M125 68l-40 10" stroke="#d83030" stroke-width="8" /><path d="M58 86l26-20 4 24z" fill="#b01818" stroke="#500" stroke-width="2" />
          <path d="M146 72l10 52" stroke="#2c8a2c" stroke-width="8" /><path d="M148 76l8 46" stroke="#8fe08f" stroke-width="2" /><path d="M144 126l26-3-7 28z" fill="#1c701c" />
          <path d="M124 52l18-2 8 6-2 18-12 5-12-4z" fill="#1414c8" /><path d="M136 54h14v16l-10 6z" fill="#101078" />
          <text x="34" y="101" fill="#f01010">X</text><text x="154" y="179" fill="#109010">Y</text>
        </svg>

        <div class="taskpane">
          <button v-for="(t, i) in task" :key="t" type="button" :class="{ on: i === activeTask }" :aria-label="t" @click="activeTask = i"><svg class="ic"><use :href="'#' + t" /></svg></button>
        </div>

        <form class="dialog" @submit.prevent>
          <div class="caption"><span>零部件属性</span><button type="button" class="close" aria-label="关闭"><svg viewBox="0 0 12 10"><path d="M2 1l8 8M10 1L2 9" stroke="#4a4a50" stroke-width="4" /><path d="M2 1l8 8M10 1L2 9" stroke="#fff" stroke-width="2.400" /></svg></button></div>
          <div class="client">
            <fieldset class="g1">
              <legend>一般属性</legend>
              <div class="fr r1">
                <label for="cn" class="l1">零部件名称(N):</label>
                <span class="inp"><span class="hl"><input id="cn" v-model="compName" size="1"></span></span>
                <label for="inst" class="l2">实例号(I):</label><input id="inst" class="tiny" value="1" disabled>
                <label for="full" class="l3">全名(E):</label><input id="full" class="grow ro" value="1100杂质A焊接件<1>" readonly>
              </div>
              <div class="fr r2"><label for="cr">零部件参考(F):</label><input id="cr" v-model="compRef" class="grow"></div>
              <div class="fr r3"><label for="sr">短管参考(F):</label><input id="sr" class="grow ro" readonly></div>
              <div class="fr r4"><label for="de">零部件说明(D)</label><input id="de" class="grow ro" value="1100杂质A焊接件" readonly></div>
              <div class="fr r5"><label for="pa">模型文件路径(D):</label><input id="pa" class="grow ro" value="D:\现行最新201503\" readonly></div>
              <p class="note">(请使用文件/替换指令来替换零部件的模型)</p>
            </fieldset>

            <fieldset class="g2">
              <legend>显示状态特定的属性</legend>
              <label class="chk"><input v-model="hide" type="checkbox">隐藏零部件(M)</label>
              <fieldset class="sub">
                <legend>参考的显示状态</legend>
                <div class="list l-a">
                  <ul><li><b>显示状态-1</b></li><li><span>&lt;默认&gt;_外观 显示状态</span></li></ul>
                </div>
              </fieldset>
              <div class="selrow"><label for="ds">在此更改显示属性:</label><select id="ds" class="dd"><option>此显示状态</option></select></div>
            </fieldset>

            <fieldset class="g3">
              <legend>配置特定属性</legend>
              <div class="two">
                <div class="lc">
                  <fieldset class="sub">
                    <legend>所参考的配置</legend>
                    <div class="list l-b"><ul><li><b>默认</b></li></ul></div>
                  </fieldset>
                  <div class="selrow"><label for="cs">在此更改属性:</label><select id="cs" class="dd off" disabled></select></div>
                </div>
                <div class="rc">
                  <fieldset class="sub s1">
                    <legend>压缩状态</legend>
                    <label v-for="o in ['压缩(S)', '还原(R)', '轻化']" :key="o"><input v-model="suppress" type="radio" name="sup" :value="o">{{ o }}</label>
                  </fieldset>
                  <fieldset class="sub s2">
                    <legend>求解为</legend>
                    <label v-for="o in ['刚性(R)', '柔性(F)']" :key="o"><input v-model="solve" type="radio" name="sol" :value="o">{{ o }}</label>
                  </fieldset>
                  <label class="ck2"><input v-model="envelope" type="checkbox">封套</label>
                  <label class="ck2 two-line"><input v-model="exclude" type="checkbox"><span>不包括在<br>材料明细表中</span></label>
                </div>
              </div>
            </fieldset>

            <div class="btns"><button type="submit" class="def">确定(K)</button><button type="button">取消(C)</button><button type="button">帮助(H)</button></div>
          </div>

          <svg class="smear" viewBox="0 0 256 34" preserveAspectRatio="none">
            <path d="M16 2Q2 4 2 15t20 17h20V2z" fill="#dbdade" /><path d="M28 2h43v29H28z" fill="#d9dae1" /><path d="M71 4q20 2 40 3v25H71z" fill="#e1e1df" />
            <path d="M111 6h40v26h-40z" fill="#d5d4cf" /><path d="M151 6q20-1 38-5v30q-10 1-38 1z" fill="#dadade" /><path d="M189 1h44v30h-44z" fill="#e3e6e6" /><path d="M232 1h18q6 3 6 14t-8 14l-16 2z" fill="#e2e1dd" /><path d="M251 4q5 4 5 11t-5 9z" fill="#a9abaf" />
          </svg>
          <div class="arrow">
            <svg viewBox="0 0 76 336"><path d="M36 1L74 162H59L61 335H17L15 163H1z" fill="#ff3c3c" fill-opacity=".86" /></svg>
            <span>打开后参考路径变化</span>
          </div>
        </form>

        <div class="mark">三维网<span>www.3dportal.cn</span></div>
      </section>
    </main>
  </div>
</template>

<style>
html, body { overflow: hidden; }
</style>

<style scoped>
* { box-sizing: border-box; }
.app { height: 100vh; display: flex; flex-direction: column; overflow: hidden; background: #d7dbe0; color: #1a1a1a; font: 12px/14px "Noto Sans", "Noto Sans CJK SC", sans-serif; }
.defs { position: absolute; width: 0; height: 0; }
button { font: inherit; color: inherit; background: none; border: 0; padding: 0; margin: 0; white-space: nowrap; }
.ic { width: 16px; height: 16px; display: block; flex: none; }
.caret { width: 0; height: 0; border: 3px solid transparent; border-top-color: #333; border-bottom: 0; display: block; flex: none; }
.caret.off { border-top-color: #aaa; }

.titlebar { height: 26px; flex: none; display: flex; border-bottom: 1px solid #2f3134; background: #dfe1e5; }
.logo { width: 129px; background: #7f7f7f; display: flex; align-items: center; flex: none; padding-left: 6px; }
.ds { width: 24px; height: 22px; }
.brand { font: italic 14px/20px "Open Sans", sans-serif; color: #c9c9cb; margin-left: 3px; padding-top: 4px; }
.brand b { font-weight: 700; }
.menu { width: 404px; flex: none; background: linear-gradient(#9fa0a3, #b0b1b5); border-right: 1px solid #86888c; display: flex; align-items: center; padding-left: 17px; gap: 14px; }
.menu button { height: 24px; }
.quick { flex: 1; display: flex; align-items: center; padding-left: 6px; gap: 3px; background: linear-gradient(#e6e7ea, #d3d5d9); }
.qgroup { display: flex; align-items: center; width: 32px; gap: 6px; }
.selbox { display: flex; align-items: center; width: 37px; height: 23px; border: 1px solid #777; background: linear-gradient(90deg, #a9abb0 0 22px, #777 22px 23px, #e4e5e8 23px); padding-left: 3px; gap: 7px; }
.solo { margin-right: 5px; }
.doc { margin-left: auto; padding-right: 40px; }

.ribbon { height: 77px; flex: none; display: flex; align-items: stretch; border-bottom: 1px solid #111; background: #d7dbe0; }
.tool { display: flex; flex-direction: column; align-items: center; padding-top: 14px; flex: none; position: relative; }
.tool.tall { padding-top: 8px; }
.tool.sep { margin-right: 2px; }
.tool.sep::after { content: ""; position: absolute; right: -1px; top: 4px; height: 65px; width: 1px; background: #4b4d50; }
.tl { line-height: 13px; }
.tl.lat { font-size: 11px; }
.tool .caret { margin-top: 12px; }

.body { flex: 1; display: flex; min-height: 0; }
.side { width: 343px; flex: none; display: flex; flex-direction: column; border-right: 2px solid #15171a; background: #d7dbe0; }
.cmdtabs { display: flex; height: 24px; align-items: flex-start; border-bottom: 1px solid #8b90a8; flex: none; }
.cmdtabs button { height: 19px; background: #a5a6aa; border: 1px solid #1c1c1e; border-width: 0 1px 2px 0; line-height: 16px; }
.cmdtabs button.on { background: #dbdfe4; height: 21px; }
.cols { flex: 1; display: flex; min-height: 0; }
.strip { width: 43px; flex: none; padding-top: 3px; }
.grip { margin: 0 3px 6px 2px; height: 2px; background: repeating-linear-gradient(90deg, #55585e 0 2px, transparent 2px 4px); }
.sbtn { height: 23px; padding-left: 4px; display: flex; align-items: center; gap: 11px; }
.sbtn:last-child { height: 31px; padding-bottom: 8px; border-bottom: 1px solid #8c8f94; }
.fm { flex: 1; min-width: 0; display: flex; flex-direction: column; background: #e4e6ec; border-left: 1px solid #c5c8ce; }
.fmtabs { display: flex; height: 26px; padding-top: 4px; background: #d7dbe0; border-bottom: 1px solid #222; flex: none; }
.fmtabs button { width: 28px; height: 21px; display: flex; justify-content: center; align-items: center; background: #a5a6aa; border: 1px solid #222; border-width: 2px 2px 0 1px; }
.fmtabs button.on { background: #e4e6ec; height: 22px; }
.more { margin-left: auto; padding: 7px 5px 0 0; }
.more svg { width: 9px; height: 8px; display: block; }
.filter { height: 18px; margin: 1px 1px 0 0; border: 1px solid #555; background: #f1f1f2; display: flex; align-items: center; padding-left: 7px; gap: 4px; flex: none; }
.filter .caret { border-width: 4px 4px 0; }
.fun { width: 11px; height: 12px; }
.treebox { flex: 1; display: flex; min-height: 0; }
.tree { flex: 1; min-width: 0; overflow: hidden; padding: 3px 0 0 1px; }
.row { height: 18px; display: flex; align-items: center; white-space: pre; }
.guide { width: 19px; height: 18px; flex: none; position: relative; background: repeating-linear-gradient(#7c7f86 0 1px, transparent 1px 2px) 8px 0 / 1px 100% no-repeat; display: block; }
.guide.leaf::before { content: ""; position: absolute; left: 9px; top: 9px; width: 9px; height: 1px; background: repeating-linear-gradient(90deg, #7c7f86 0 1px, transparent 1px 2px); }
.exp { position: absolute; left: 4px; top: 5px; width: 9px; height: 9px; display: block; }
.exp svg { display: block; width: 9px; height: 9px; }
.lbl { margin-left: 4px; padding: 0 1px; height: 17px; line-height: 17px; display: flex; }
.lbl.sel { background: #3399ff; color: #fff; }
.ang { font-family: "DejaVu Sans", sans-serif; }
.vbar { width: 13px; flex: none; margin-right: 1px; background: #f0f0f1; display: flex; flex-direction: column; align-items: center; padding: 11px 0 8px; }
.up, .down { width: 0; height: 0; border: 3px solid transparent; flex: none; }
.up { border-bottom-color: #333; border-top: 0; }
.down { border-top-color: #333; border-bottom: 0; margin-top: auto; }
.vthumb { width: 13px; height: 194px; margin-top: 7px; border: 1px solid #999; border-radius: 2px; background: linear-gradient(90deg, #f5f5f5, #cfd0d2); display: flex; flex-direction: column; gap: 2px; align-items: center; justify-content: center; }
.vthumb i { width: 7px; height: 1px; background: #666; }
.hbar { height: 15px; flex: none; background: #ececee; display: flex; align-items: center; padding: 0 21px 0 4px; border-top: 1px solid #fafafa; }
.lf, .rt { width: 0; height: 0; border: 3px solid transparent; }
.lf { border-right-color: #333; border-left: 0; border-right-width: 4px; }
.rt { border-left-color: #333; border-right: 0; margin-left: auto; border-left-width: 4px; }
.hthumb { width: 191px; height: 14px; margin-left: 8px; border: 1px solid #8f9094; border-radius: 2px; background: linear-gradient(#f6f6f6, #c8c9cc); display: flex; gap: 2px; align-items: center; justify-content: center; }
.hthumb i { width: 1px; height: 7px; background: #555; }

.view { flex: 1; position: relative; min-width: 0; background: #808080; overflow: hidden; }
.hud { display: flex; align-items: center; gap: 7px; padding: 5px 13px 0 214px; height: 22px; }
.hitem { display: flex; align-items: center; }
.hitem .caret { margin: 2px 2px 0 6px; border-top-color: #444; }
.wctl { margin-left: auto; display: flex; gap: 9px; }
.wctl button { width: 14px; height: 12px; }
.wctl svg { width: 14px; height: 12px; display: block; }
.handle { position: absolute; left: -2px; top: 334px; width: 9px; height: 39px; background: #e4e6ec; border: 1px solid #222; display: flex; flex-direction: column; justify-content: center; align-items: center; gap: 4px; }
.handle i { border: 2px solid transparent; border-right: 3px solid #222; border-left: 0; }
.model { position: absolute; left: 0; top: 157px; width: 152px; height: 140px; }
.triad { position: absolute; left: 0; bottom: 0; width: 152px; height: 76px; }
.triad text { font: 33px "Liberation Mono", monospace; }
.taskpane { position: absolute; right: 0; top: 59px; display: flex; flex-direction: column; gap: 1px; }
.taskpane button { width: 25px; height: 23px; background: #b5b6b9; border: 1px solid #1c1c1e; border-right: 0; display: flex; align-items: center; justify-content: center; }
.taskpane button.on { background: #eef0f4; }

.dialog { position: absolute; left: 146px; top: 23px; bottom: 0; width: 537px; border: 1px solid #14181c; border-bottom: 0; border-radius: 7px 7px 0 0; padding: 0 6px; color: #000; background: linear-gradient(#8d9aa8 0 190px, #3d4f32 194px 240px, #60758a 260px) 0 0 / 7px 100% no-repeat, linear-gradient(#9aa6b2 0 190px, #60758a 194px) 100% 0 / 7px 100% no-repeat, linear-gradient(100deg, #b9c3cc 0, #7f90a1 18%, #60758a 32%, #60758a 60%, #9aa8b5 72%, #8795a4 100%); box-shadow: inset 0 0 0 1px #c5d0da, 3px 3px 14px 5px #000; }
.caption { height: 28px; display: flex; justify-content: space-between; }
.caption span { line-height: 28px; text-shadow: 0 0 6px #fff, 0 0 8px #fff; padding-left: 1px; }
.close { width: 48px; height: 19px; border: 1px solid #43181a; border-top: 0; border-radius: 0 0 4px 4px; background: linear-gradient(#e3a79d 0 45%, #b8341f 50%, #d0624a); box-shadow: inset 0 0 0 1px #f0c5bd; display: flex; align-items: center; justify-content: center; }
.close svg { width: 12px; height: 10px; }
.client { height: calc(100% - 28px); border: 1px solid #4c5864; border-bottom: 0; background: #f0f0f0; padding: 4px 13px 0 6px; }
fieldset { min-width: 0; margin: 0; padding: 0; border: 1px solid #d0dae3; border-radius: 3px; }
legend { margin-left: 6px; padding: 0 3px 0 2px; line-height: 16px; height: 16px; }
.g1 > legend { margin-left: -2px; }
.g2 > legend { margin-left: -5px; }
input, select { font: inherit; color: #000; margin: 0; min-width: 0; }
.g1 { height: 185px; padding: 0 4px 0 8px; }
.fr { display: flex; align-items: center; height: 21px; }
.fr label { width: 132px; flex: none; }
.fr > input { height: 21px; border: 1px solid #d5dae2; border-top-color: #a5a9b0; background: #fff; padding: 0 2px 2px; }
.grow { flex: 1; }
.fr > input.ro { background: #f0f0f0; }
.fr > input.tiny { width: 26px; border: 1px solid #a5a9ad; background: #f0f0f0; color: #777; padding-left: 3px; }
.fr .l1 { width: 101px; }
.fr .l2 { width: 71px; padding-left: 7px; }
.fr .l3 { width: 66px; padding-left: 6px; }
.inp { width: 122px; height: 21px; border: 1px solid #56a0d8; background: #fff; padding: 2px; display: flex; border-radius: 1px; }
.hl { width: 95px; height: 14px; background: #3399ff; display: flex; }
.hl input { width: 100%; border: 0; padding: 0; background: none; color: #fff; height: 14px; outline: 0; line-height: 14px; }
.r1 { margin-top: 3px; }
.r2 { margin-top: 8px; }
.r3 { margin-top: 6px; }
.r4 { margin-top: 14px; }
.r5 { margin-top: 6px; }
.r5 label { padding-top: 6px; }
.note { margin: 6px 0 0 2px; line-height: 18px; }
.g2 { margin-top: 6px; height: 157px; padding: 0 8px 0 11px; }
.chk { display: flex; align-items: center; gap: 3px; height: 15px; margin-top: 4px; }
input[type=checkbox] { appearance: none; width: 13px; height: 13px; border: 1px solid #8e8f8f; background: linear-gradient(135deg, #cbcfd5, #f6f6f6); box-shadow: inset 0 0 0 1px #f4f4f4; flex: none; }
input[type=radio] { appearance: none; width: 12px; height: 12px; border: 1px solid #8e8f8f; border-radius: 50%; background: radial-gradient(circle at 60% 60%, #fafafa, #cdd1d6); flex: none; }
input[type=radio]:checked { background: radial-gradient(circle, #4cc0f0 0, #0e3f66 3px, #e8eef2 4px); }
.sub legend { margin-left: -2px; }
.g2 .sub { height: 86px; padding: 0 7px; }
.list { border: 1px solid #777b80; border-right-color: #9a9ca8; box-shadow: inset 0 0 0 1px #fff, inset 2px 2px 0 #70747a, inset -2px -2px 0 #dcdde2; background: #fff; }
.l-a { height: 68px; padding: 2px 0 0 15px; margin-top: 1px; }
.l-b { height: 132px; padding: 2px 0 0 15px; margin-top: 7px; }
.list ul { list-style: none; margin: 0; padding: 0; }
.list li { height: 16px; line-height: 16px; padding-left: 10px; position: relative; }
.list li::before { content: ""; position: absolute; left: 0; top: 7px; width: 9px; border-top: 1px dotted #666; }
.list li + li::after { content: ""; position: absolute; left: 0; top: -9px; height: 17px; border-left: 1px dotted #666; }
.list b { background: #f0f0f0; display: inline-block; padding: 0 2px 0 1px; }
.list li span { padding-left: 1px; }
.selrow { display: flex; align-items: center; height: 21px; margin: 8px 0 0 2px; }
.selrow label { width: 160px; flex: none; }
.dd { appearance: none; width: 132px; height: 21px; border: 1px solid #707070; border-radius: 3px; padding: 0 3px; background: conic-gradient(from 315deg at 4px 4px, #000 0 90deg, transparent 0) right 4px center / 8px 4px no-repeat, linear-gradient(#f4f4f4, #e4e4e4 50%, #cfcfcf); }
.dd.off { border-color: #adadad; background: conic-gradient(from 315deg at 4px 4px, #999 0 90deg, transparent 0) right 4px center / 8px 4px no-repeat, #f4f4f4; }
.g3 { margin-top: 1px; height: 229px; }
.two { display: flex; gap: 17px; padding: 1px 3px 0 11px; }
.lc { flex: 1; min-width: 0; }
.lc .sub { height: 161px; padding: 0 7px; }
.lc .selrow { margin-top: 18px; }
.rc { width: 133px; flex: none; margin-top: -1px; }
.rc label { display: flex; align-items: center; gap: 4px; }
.rc .sub { padding-left: 5px; }
.s1 { height: 86px; }
.s1 label { height: 22px; }
.s2 { height: 63px; margin-top: 8px; padding-top: 7px; }
.s2 label { height: 18px; }
.s1 legend, .s2 legend { margin-left: 0; }
.rc .ck2 { padding-left: 6px; height: 16px; margin-top: 5px; gap: 3px; }
.rc .two-line { align-items: flex-start; height: 28px; margin-top: 3px; line-height: 13px; }
.btns { display: flex; gap: 20px; padding: 22px 0 0 147px; }
.btns button { width: 58px; height: 21px; border: 1px solid #707070; border-radius: 3px; background: linear-gradient(#f2f2f2, #ebebeb 50%, #d2d2d2); box-shadow: inset 0 0 0 1px #fbfbfb; }
.btns .def { border-color: #2c7cb4; box-shadow: inset 0 0 0 1px #4cc8f0; background: linear-gradient(#f2f4f5, #d9e4ea); }
.smear { position: absolute; left: 257px; top: 160px; width: 257px; height: 34px; }
.arrow { position: absolute; left: 154px; top: 189px; width: 76px; height: 336px; }
.arrow svg { position: absolute; inset: 0; width: 76px; height: 336px; }
.arrow span { position: absolute; left: 25px; top: 111px; writing-mode: vertical-rl; text-orientation: sideways; font: 20px/22px "Noto Sans CJK SC", sans-serif; font-weight: 300; color: #7a1c1c; white-space: nowrap; }
.mark { position: absolute; right: 18px; bottom: 3px; color: #fff; font: 700 18px/20px "Noto Sans CJK SC", sans-serif; display: flex; align-items: center; text-shadow: 1px 0 #e01818, -1px 0 #e01818, 0 1px #e01818, 0 -1px #e01818; }
.mark span { font: 700 15px/20px "DejaVu Sans", sans-serif; }
</style>
